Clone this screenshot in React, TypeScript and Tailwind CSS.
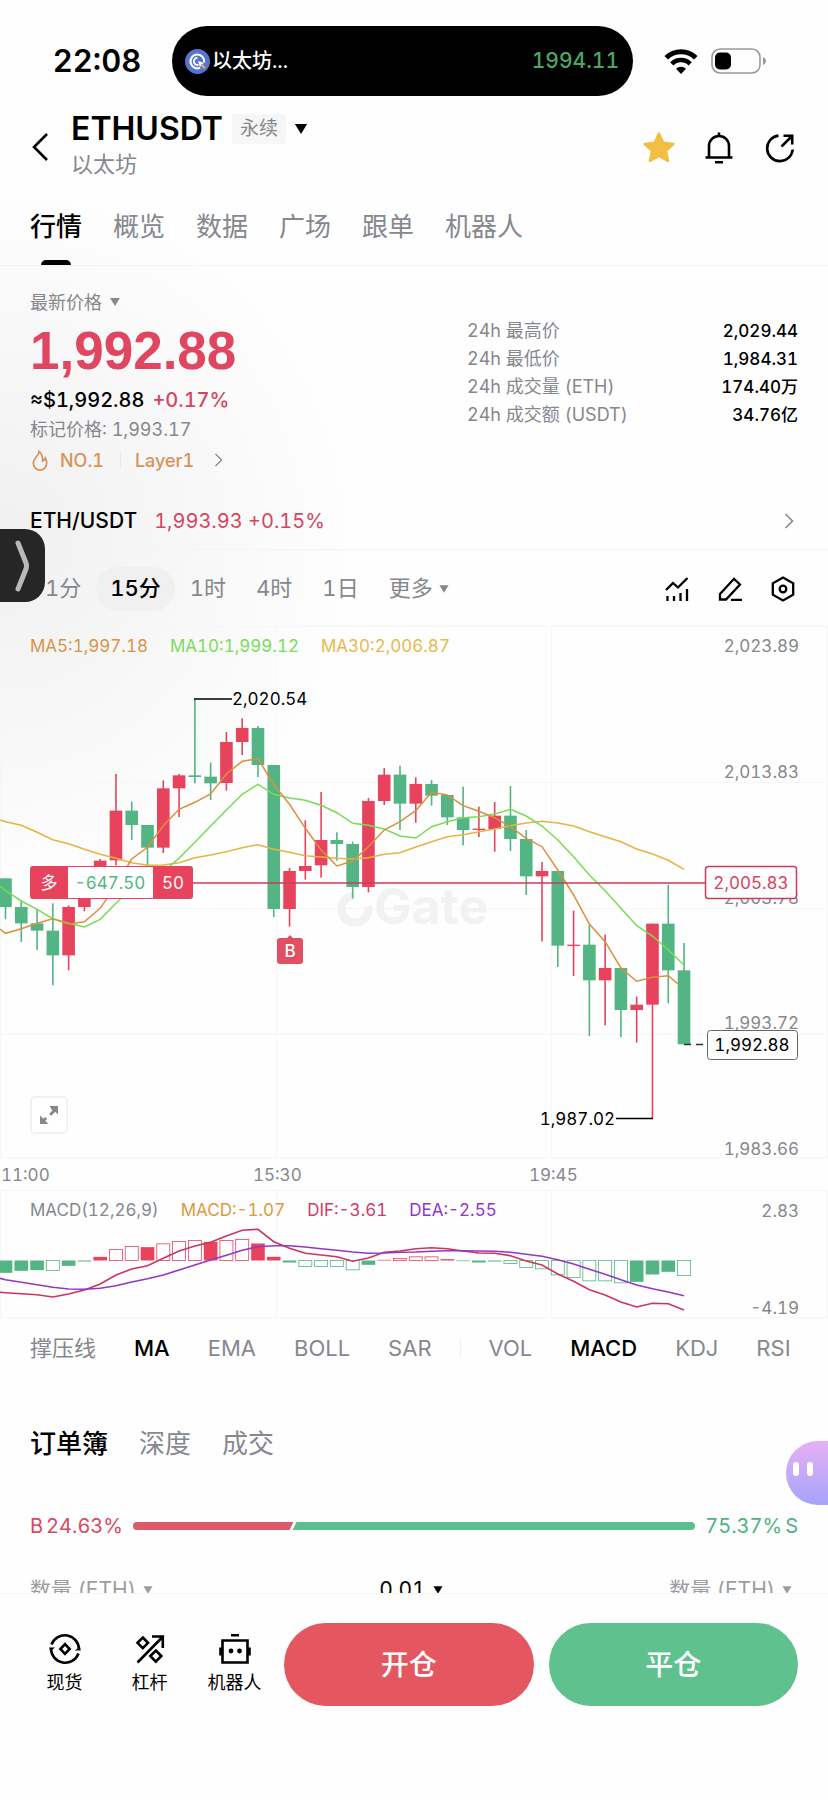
import React from "react";

type Candle = {
  o: "up" | "down";
  high: number;
  top: number;
  bottom: number;
  low: number;
};

type Bar = { v: number; filled?: boolean };

const RED = "#e8435d";
const GREEN = "#52b583";
const STEP = 15.78;

const cx = (i: number) => 5.5 + i * STEP;

// price series, three units to one chart pixel
const up = (high: number, top: number, bottom: number, low: number): Candle => ({ o: "up", high, top, bottom, low });
const down = (high: number, top: number, bottom: number, low: number): Candle => ({ o: "down", high, top, bottom, low });

const candles: Candle[] = [
  down(715, 715, 801, 838),
  down(781, 801, 850, 906),
  down(808, 850, 872, 930),
  down(790, 872, 946, 1036),
  up(796, 801, 946, 991),
  up(730, 740, 801, 814),
  up(657, 662, 740, 750),
  up(402, 512, 661, 676),
  down(485, 512, 555, 600),
  down(555, 555, 623, 680),
  up(421, 445, 623, 639),
  up(402, 406, 445, 531),
  down(177, 406, 411, 430),
  down(368, 410, 430, 480),
  up(276, 306, 429, 452),
  up(235, 264, 306, 345),
  down(258, 264, 375, 411),
  down(375, 375, 807, 831),
  up(684, 693, 807, 860),
  up(541, 678, 693, 719),
  up(456, 600, 676, 713),
  down(577, 600, 612, 662),
  down(605, 612, 741, 775),
  up(474, 483, 741, 757),
  up(384, 404, 483, 495),
  down(377, 404, 491, 570),
  up(412, 432, 491, 548),
  down(420, 432, 467, 497),
  down(465, 465, 532, 555),
  down(440, 532, 570, 616),
  up(500, 566, 570, 591),
  up(486, 527, 567, 635),
  down(438, 527, 597, 633),
  down(570, 597, 709, 765),
  up(666, 693, 709, 904),
  down(693, 693, 917, 981),
  up(812, 914, 918, 1008),
  down(856, 914, 1021, 1188),
  up(884, 984, 1021, 1156),
  down(984, 984, 1110, 1191),
  up(1070, 1094, 1110, 1208),
  up(851, 851, 1094, 1434),
  down(734, 851, 991, 1090),
  down(909, 991, 1213, 1213),
];

const ma5 = [880, 866, 850, 836, 852, 845, 805, 735, 657, 622, 557, 508, 487, 462, 402, 364, 356, 434, 493, 565, 630, 678, 663, 620, 570, 545, 512, 457, 465, 497, 514, 533, 560, 595, 620, 690, 765, 852, 905, 984, 1024, 1012, 1007];
const ma10 = [752, 783, 808, 836, 850, 861, 838, 790, 745, 720, 695, 655, 607, 558, 510, 463, 433, 463, 474, 481, 496, 518, 550, 556, 567, 588, 594, 560, 545, 533, 530, 522, 508, 528, 558, 600, 650, 705, 752, 805, 857, 888, 930, 975];
const ma30 = [545, 556, 577, 599, 611, 628, 643, 655, 668, 676, 675, 668, 653, 645, 635, 623, 614, 628, 637, 647, 651, 655, 657, 653, 643, 638, 621, 605, 590, 584, 575, 567, 557, 549, 544, 549, 558, 575, 590, 605, 627, 642, 661, 688];

const dif = [338, 341, 344, 351, 342, 330, 312, 285, 267, 257, 235, 213, 198, 187, 168, 151, 148, 185, 205, 220, 225, 230, 244, 234, 217, 213, 206, 203, 206, 213, 219, 220, 227, 243, 255, 282, 304, 329, 345, 366, 381, 370, 371, 390];
const dea = [299, 307, 314, 322, 327, 328, 325, 317, 306, 296, 285, 270, 255, 240, 226, 211, 200, 197, 197, 201, 206, 211, 216, 220, 219, 217, 216, 214, 212, 212, 213, 214, 217, 223, 229, 239, 252, 268, 283, 299, 315, 326, 336, 347];

const bars: Bar[] = [
  { v: -37, filled: true }, { v: -31, filled: true }, { v: -29, filled: true }, { v: -30 },
  { v: -16, filled: true }, { v: -3, filled: true }, { v: 11, filled: true }, { v: 33 },
  { v: 42 }, { v: 40, filled: true }, { v: 50 }, { v: 57 }, { v: 60 }, { v: 56, filled: true },
  { v: 60 }, { v: 63 }, { v: 51, filled: true }, { v: 11, filled: true }, { v: -6, filled: true },
  { v: -18 }, { v: -18 }, { v: -18 }, { v: -28 }, { v: -13, filled: true }, { v: 2, filled: true },
  { v: 6 }, { v: 11 }, { v: 11 }, { v: 4, filled: true }, { v: -2, filled: true },
  { v: -6, filled: true }, { v: -3, filled: true }, { v: -9 }, { v: -21 }, { v: -25 }, { v: -43 },
  { v: -51 }, { v: -61 }, { v: -61 }, { v: -67 }, { v: -64, filled: true }, { v: -42, filled: true },
  { v: -34, filled: true }, { v: -45 },
];

// starts at the left edge, where the series runs out of view
const line = (start: number, values: number[], offset: number) =>
  `M0 ${start} ` + values.map((v, i) => `L${cx(i).toFixed(1)} ${(v / 3 + offset).toFixed(1)}`).join(" ");

const Caret = ({ className }: { className: string }) => (
  <svg viewBox="0 0 12 9" className={className} fill="currentColor" aria-hidden="true">
    <path d="M.5 0h11L6 9z" />
  </svg>
);

const ChevronRight = ({ className }: { className: string }) => (
  <svg viewBox="0 0 10 16" className={className} fill="none" stroke="currentColor" strokeWidth="1.6" aria-hidden="true">
    <path d="M1.5 1l7 7-7 7" />
  </svg>
);

const StatusBar = () => (
  <div className="flex h-[96px] items-end">
    <div className="flex h-[70px] w-[172px] items-center justify-center pl-[22px] text-[31px] font-semibold">
      22:08
    </div>
    <div className="flex h-[70px] flex-1 items-center justify-between rounded-full bg-black pr-[14px] pl-[13px]">
      <div className="flex items-center gap-[2px]">
        <svg viewBox="0 0 24 24" className="size-[25px]" aria-hidden="true">
          <circle cx="12" cy="12" r="12" fill="#5873cf" />
          <path d="M14.5 18A6.6 6.6 0 1 1 18.4 13" fill="none" stroke="#fff" strokeWidth="2" />
          <path d="M12 8.5a3.4 3.4 0 1 0 1 6.6" fill="none" stroke="#fff" strokeWidth="1.8" />
          <path d="M12.5 11.5l6 2-3 1.3-1 3z" fill="#fff" />
          <path d="M16 15l3 3.4" stroke="#e8c14a" strokeWidth="2" />
        </svg>
        <span className="text-[20px] font-medium text-white">以太坊...</span>
      </div>
      <span className="text-[21px] font-medium text-[#4aa765]">1994.11</span>
    </div>
    <div className="flex h-[70px] w-[195px] items-center gap-[13px] pl-[31px]">
      <svg viewBox="0 0 34 25" className="h-[25px] w-[34px]" aria-label="Wi-Fi">
        <path d="M2.2 8.8a21 21 0 0 1 29.6 0" fill="none" stroke="#000" strokeWidth="5" />
        <path d="M7.8 14.8a13 13 0 0 1 18.4 0" fill="none" stroke="#000" strokeWidth="4.6" />
        <path d="M17 25l-5-5.2a7.2 7.2 0 0 1 10 0z" />
      </svg>
      <svg viewBox="0 0 56 26" className="h-[26px] w-[56px]" aria-label="电量">
        <rect x="1" y="1" width="48" height="24" rx="8" fill="none" stroke="#9a9a9a" strokeWidth="1.6" />
        <rect x="4" y="4.5" width="16" height="17" rx="5" />
        <path d="M52 9c4 1.5 4 6.5 0 8z" fill="#9a9a9a" />
      </svg>
    </div>
  </div>
);

const Header = () => (
  <header className="mt-2 flex h-20 items-center justify-between px-[30px]">
    <div className="flex items-center gap-[23px]">
      <button type="button" aria-label="返回" className="pt-[6px]">
        <svg viewBox="0 0 18 30" className="h-[30px] w-[18px]" fill="none" stroke="#000" strokeWidth="2.6">
          <path d="M17 2L4 15l13 13" />
        </svg>
      </button>
      <div className="h-20">
        <div className="flex h-[50px] items-center">
          <h1 className="text-[32px] font-semibold">ETHUSDT</h1>
          <span className="ml-[9px] rounded-[3px] bg-[#f6f6f6] px-2 text-[19px] leading-[30px] text-[#85888d]">永续</span>
          <button type="button" aria-label="切换合约" className="ml-2">
            <Caret className="h-[10px] w-[14px]" />
          </button>
        </div>
        <p className="text-[22px] leading-[20px] text-[#85888d]">以太坊</p>
      </div>
    </div>
    <div className="flex items-center gap-[27px] pt-2">
      <button type="button" aria-label="收藏">
        <svg viewBox="0 0 34 34" className="size-[34px]" fill="#f2bf43" stroke="#f2bf43" strokeWidth="2.5" strokeLinejoin="round">
          <path d="M17 2.5l4.3 9.2 10.2 1.2-7.5 6.9 2 10.2-9-5-9 5 2-10.2-7.5-6.9 10.2-1.2z" />
        </svg>
      </button>
      <button type="button" aria-label="提醒">
        <svg viewBox="0 0 34 34" className="size-[34px]" fill="none" stroke="#000" strokeWidth="2.6">
          <path d="M16 1.5v4M6 26V15a10 10 0 0 1 20 0v11M2.5 26.5h27M12 31.2h8" />
        </svg>
      </button>
      <button type="button" aria-label="分享">
        <svg viewBox="0 0 34 34" className="size-[34px]" fill="none" stroke="#000" strokeWidth="2.6">
          <path d="M14.5 4.6A12.8 12.8 0 1 0 28.7 18.5M17.5 15.5L28 5M19.5 4.8H28.2v8.7" />
        </svg>
      </button>
    </div>
  </header>
);

const tabs = ["行情", "概览", "数据", "广场", "跟单", "机器人"];

const Tabs = () => (
  <nav className="flex h-[82px] items-stretch gap-[31px] border-b border-[#f4f4f4] px-[30px] text-[26px]">
    {tabs.map((tab, i) => (
      <button
        key={tab}
        type="button"
        className={
          i === 0
            ? "flex flex-col items-center justify-end gap-[14px] font-medium text-black"
            : "flex flex-col items-center justify-end gap-[14px] text-[#85888d]"
        }
      >
        <span>{tab}</span>
        <span className={i === 0 ? "h-[5px] w-[30px] rounded-t-full bg-black" : "h-[5px] w-[30px]"} />
      </button>
    ))}
  </nav>
);

const stats = [
  { label: "24h 最高价", value: "2,029.44" },
  { label: "24h 最低价", value: "1,984.31" },
  { label: "24h 成交量 (ETH)", value: "174.40万" },
  { label: "24h 成交额 (USDT)", value: "34.76亿" },
];

const Quote = () => (
  <section className="flex h-[226px] justify-between px-[30px] pt-[21px]">
    <div>
      <button type="button" className="flex h-[30px] items-center gap-[7px] text-[18px] text-[#85888d]">
        最新价格
        <Caret className="h-2 w-[12px]" />
      </button>
      <p className="font-['Liberation_Sans',sans-serif] text-[53px] leading-[68px] font-bold text-[#e0465f]">1,992.88</p>
      <p className="flex gap-2 text-[20px] leading-[30px] font-medium">
        <span>≈$1,992.88</span>
        <span className="text-[#d64560]">+0.17%</span>
      </p>
      <p className="text-[18px] leading-[30px] text-[#85888d]">标记价格: 1,993.17</p>
      <button type="button" className="flex h-[30px] items-center text-[18px] font-medium text-[#d8935a]">
        <svg viewBox="0 0 20 22" className="mr-[10px] h-[21px] w-[20px]" fill="none" stroke="currentColor" strokeWidth="1.8">
          <path d="M9 1.5C9 6 3 8.5 3 14a7 7 0 0 0 14 0c0-2.500-.5-3.700-1.400-5.500-.8 1.800-1.600 2.500-2.800 3C12.800 8 12 4 9 1.500z" />
        </svg>
        NO.1
        <span className="mr-[14px] ml-[16px] h-[14px] w-px bg-[#e8e8e8]" />
        Layer1
        <ChevronRight className="ml-[20px] h-[14px] w-[9px] text-[#85888d]" />
      </button>
    </div>
    <dl className="w-[331px] pt-[30px] leading-[28px]">
      {stats.map((s) => (
        <div key={s.label} className="flex justify-between">
          <dt className="text-[18px] text-[#85888d]">{s.label}</dt>
          <dd className="text-[17px] font-medium">{s.value}</dd>
        </div>
      ))}
    </dl>
  </section>
);

const Spot = () => (
  <a href="#spot" className="flex h-[58px] items-center border-b border-[#f4f4f4] px-[30px] text-[20px]">
    <span className="text-[21px] font-medium">ETH/USDT</span>
    <span className="ml-[17px] text-[#d64560]">1,993.93 +0.15%</span>
    <ChevronRight className="mr-1 ml-auto h-[16px] w-[10px] text-[#85888d]" />
  </a>
);

const Intervals = () => (
  <div className="relative flex h-[76px] items-center justify-between pt-px pr-[32px] pl-[45px]">
    <div className="flex items-center text-[22px] text-[#85888d]">
      <button type="button">1分</button>
      <button type="button" className="mx-[15px] h-[44px] rounded-full bg-[#f0f0f0] px-[14px] font-medium text-black">
        15分
      </button>
      <div className="flex gap-[30px]">
        <button type="button">1时</button>
        <button type="button">4时</button>
        <button type="button">1日</button>
        <button type="button" className="flex items-center gap-[6px]">
          更多
          <Caret className="h-[8px] w-[10px]" />
        </button>
      </div>
    </div>
    <div className="flex items-center gap-[27px]">
      <button type="button" aria-label="指标">
        <svg viewBox="0 0 26 26" className="size-[26px]" fill="none" stroke="#000" strokeWidth="2.3">
          <path d="M2 14l7-7 5 4.500L23.500 2M3.500 25v-5M10 25v-5M16.500 25v-8M23 25V13" />
        </svg>
      </button>
      <button type="button" aria-label="画线">
        <svg viewBox="0 0 26 26" className="size-[26px]" fill="none" stroke="#000" strokeWidth="2.3">
          <path d="M3 18L17 2.800l6 5.700L9 23.500H3zM14 23.800h11" />
        </svg>
      </button>
      <button type="button" aria-label="设置">
        <svg viewBox="0 0 26 26" className="size-[26px]" fill="none" stroke="#000" strokeWidth="2.3">
          <path d="M13 1.500l10.200 5.800v11.400L13 24.500 2.800 18.700V7.300z" />
          <circle cx="13" cy="13" r="3.3" />
        </svg>
      </button>
    </div>
    <button
      type="button"
      aria-label="展开侧栏"
      className="absolute -top-[21px] left-0 flex h-[73px] w-[45px] items-center justify-center rounded-r-[20px] bg-[#262626]"
    >
      <svg viewBox="0 0 18 52" className="h-[52px] w-[18px]" fill="none" stroke="#b9b9bd" strokeWidth="5" strokeLinecap="round" strokeLinejoin="round">
        <path d="M4 3l8 20q1 3 0 6L4 49" />
      </svg>
    </button>
  </div>
);

const PriceChart = () => (
  <section className="relative">
    <div className="absolute top-[7px] left-[30px] flex gap-[22px] text-[17px] leading-[26px]">
      <span className="text-[#d6954c]">MA5:1,997.18</span>
      <span className="text-[#7ddb5c]">MA10:1,999.12</span>
      <span className="text-[#e6b94f]">MA30:2,006.87</span>
    </div>
    <svg viewBox="0 0 828 532" className="block w-full" fontFamily="inherit">
      <path
        d="M0 .5H828M0 156.500H828M0 282.500H828M0 408.500H828M0 531.500H828M.5 0V532M276.500 0V532M551.500 0V532M827.500 0V532"
        stroke="#f6f6f6"
        fill="none"
      />
      {/* watermark */}
      <circle cx="355" cy="283" r="13.5" fill="none" stroke="#f2f2f3" strokeWidth="8" strokeDasharray="66 19" transform="rotate(-12 355 283)" />
      <text x="374" y="298" className="text-[50px] font-bold" fill="#f2f2f3">Gate</text>

      <g className="text-[17px]" fill="#85888d" textAnchor="end">
        <text x="799" y="26">2,023.89</text>
        <text x="799" y="152">2,013.83</text>
        <text x="799" y="278">2,003.78</text>
        <text x="799" y="403">1,993.72</text>
        <text x="799" y="529">1,983.66</text>
      </g>

      {candles.map((c, i) => {
        const color = c.o === "up" ? RED : GREEN;
        return (
          <g key={i} fill={color}>
            <rect x={cx(i) - 0.8} y={c.high / 3 + 14} width="1.6" height={(c.low - c.high) / 3} />
            <rect x={cx(i) - 6.3} y={c.top / 3 + 14} width="12.6" height={(c.bottom - c.top) / 3} />
          </g>
        );
      })}

      <path d={line(194, ma30, 14)} fill="none" stroke="#e6b443" strokeWidth="1.5" />
      <path d={line(260, ma10, 14)} fill="none" stroke="#76dd55" strokeWidth="1.5" />
      <path d={line(303, ma5, 14) + " L678 358"} fill="none" stroke="#dc8f3e" strokeWidth="1.5" />

      <path d="M193 257H705" stroke="#c93c5b" strokeWidth="1.6" />

      {/* high and low of the range */}
      <g className="text-[17px]">
        <path d="M194 73H232" stroke="#000" strokeWidth="1.5" />
        <text x="232" y="79">2,020.54</text>
        <path d="M616 492.500H653" stroke="#000" strokeWidth="1.5" />
        <text x="615" y="499" textAnchor="end">1,987.02</text>
      </g>

      {/* open position */}
      <g className="text-[17px]" textAnchor="middle">
        <rect x="30" y="240" width="163" height="33" rx="3" fill={RED} />
        <rect x="68" y="241" width="85" height="31" fill="#fff" />
        <text x="49" y="263" fill="#fff">多</text>
        <text x="110" y="263" fill={GREEN}>-647.50</text>
        <text x="173" y="263" fill="#fff">50</text>
        <rect x="705.5" y="240.5" width="91" height="32" rx="3" fill="#fdfdfd" stroke="#c93c5b" strokeWidth="1.5" />
        <text x="751" y="263" fill="#d64560">2,005.83</text>
      </g>

      {/* buy marker */}
      <path d="M290 309l4 4h-8z" fill="#df5063" />
      <rect x="277" y="312" width="26" height="26" rx="3" fill="#df5063" />
      <text x="290" y="331" textAnchor="middle" className="text-[17px] font-medium" fill="#fff">B</text>

      {/* last price */}
      <path d="M684 418.500H703" stroke="#333" strokeWidth="1.5" strokeDasharray="7 5" />
      <rect x="707.5" y="404.5" width="90" height="29" rx="3" fill="#fdfdfd" stroke="#666" />
      <text x="752" y="425" textAnchor="middle" className="text-[17px]">1,992.88</text>
    </svg>
    <button
      type="button"
      aria-label="全屏"
      className="absolute bottom-[24px] left-[30px] flex size-[38px] items-center justify-center rounded-[5px] border-2 border-[#f2f2f2] bg-white"
    >
      <svg viewBox="0 0 18 18" className="size-[18px]" fill="#85888d">
        <path d="M9.500 0H18v8.500l-2.700-2.700-4 4L9.200 7.700l3.200-3.200zM0 9.500v8.500h8.500l-3.200-3.200 1.900-1.900-2-2-1.900 1.900z" />
      </svg>
    </button>
  </section>
);

const TimeAxis = () => (
  <div className="grid h-[32px] grid-cols-3 items-center pt-1 text-[17px] text-[#85888d]">
    <span className="pl-px">11:00</span>
    <span className="-ml-[23px]">15:30</span>
    <span className="-ml-[23px]">19:45</span>
  </div>
);

const MacdChart = () => (
  <section className="relative">
    <div className="absolute top-[7px] left-[30px] flex gap-[22px] text-[17px] leading-[26px]">
      <span className="text-[#85888d]">MACD(12,26,9)</span>
      <span className="text-[#dc9a3f]">MACD:-1.07</span>
      <span className="text-[#d13a68]">DIF:-3.61</span>
      <span className="text-[#9236cf]">DEA:-2.55</span>
    </div>
    <svg viewBox="0 0 828 128" className="block w-full" fontFamily="inherit">
      <path d="M0 .5H828M0 127.500H828M.5 0V128M276.500 0V128M551.500 0V128M827.500 0V128" stroke="#f6f6f6" fill="none" />
      <g className="text-[17px]" fill="#85888d" textAnchor="end">
        <text x="799" y="27">2.83</text>
        <text x="799" y="124">-4.19</text>
      </g>
      {bars.map((b, i) => {
        const color = b.v > 0 ? RED : GREEN;
        const h = Math.abs(b.v) / 3;
        return (
          <rect
            key={i}
            x={cx(i) - (b.filled ? 6.8 : 6.5)}
            y={b.v > 0 ? 70.5 - h : 70.5}
            width={b.filled ? 13.6 : 13}
            height={h}
            fill={b.filled ? color : "#fefefe"}
            stroke={b.filled ? "none" : color}
            strokeWidth=".8"
          />
        );
      })}
      <path d={line(102.3, dif, -10)} fill="none" stroke="#cc3560" strokeWidth="1.6" />
      <path d={line(88.3, dea, -10)} fill="none" stroke="#9436c6" strokeWidth="1.6" />
    </svg>
  </section>
);

const Indicators = () => (
  <div className="flex h-[60px] items-center gap-[38px] pl-[30px] text-[22px] text-[#85888d]">
    <button type="button" className="shrink-0">撑压线</button>
    <button type="button" className="font-medium text-black">MA</button>
    <button type="button">EMA</button>
    <button type="button">BOLL</button>
    <button type="button">SAR</button>
    <span className="-mx-[10px] h-[20px] w-px bg-[#f0f0f0]" />
    <button type="button">VOL</button>
    <button type="button" className="font-medium text-black">MACD</button>
    <button type="button">KDJ</button>
    <button type="button">RSI</button>
  </div>
);

const OrderBook = () => (
  <section className="relative h-[215px] overflow-hidden">
    <div className="mt-[46px] flex gap-[31px] px-[30px] text-[26px] leading-[40px] text-[#85888d]">
      <button type="button" className="font-medium text-black">订单簿</button>
      <button type="button">深度</button>
      <button type="button">成交</button>
    </div>
    <div className="mt-[47px] flex items-center gap-[10px] px-[30px] text-[20px] leading-[30px]">
      <p className="flex gap-[3px] text-[#d9495f]">
        <span>B</span>
        <span>24.63%</span>
      </p>
      <div className="h-[8px] flex-1 overflow-hidden rounded-full">
        <svg viewBox="0 0 564 8" preserveAspectRatio="none" className="h-full w-full">
          <path d="M0 0H161L157 8H0z" fill="#dd5a68" />
          <path d="M164 0H564V8H160z" fill="#5fbf8c" />
        </svg>
      </div>
      <p className="flex gap-[3px] text-[#4fb381]">
        <span>75.37%</span>
        <span>S</span>
      </p>
    </div>
    <div className="mt-[34px] flex items-center justify-between pr-[36px] pl-[30px] text-[21px] leading-[30px] text-[#9b9da1]">
      <button type="button" className="flex items-center gap-[7px]">
        数量 (ETH)
        <Caret className="h-2 w-[10px]" />
      </button>
      <button type="button" className="flex items-center gap-[7px] text-black">
        0.01
        <Caret className="h-2 w-[10px]" />
      </button>
      <button type="button" className="flex items-center gap-[7px]">
        数量 (ETH)
        <Caret className="h-2 w-[10px]" />
      </button>
    </div>
    <button
      type="button"
      aria-label="助手"
      className="absolute top-[63px] right-0 flex h-[64px] w-[42px] items-start gap-[8px] rounded-l-full bg-gradient-to-b from-[#e6b0f5] to-[#a5a3fb] pt-[21px] pl-[7px]"
    >
      <span className="h-[14px] w-[6px] rounded-full bg-white" />
      <span className="h-[14px] w-[6px] rounded-full bg-white" />
    </button>
  </section>
);

const BottomBar = () => (
  <footer className="flex h-[207px] items-start gap-[7px] border-t border-[#f6f6f6] bg-[#fefefe] pt-[29px] pr-[30px] pl-[22px]">
    <nav className="grid h-[83px] w-[255px] grid-cols-3 items-center text-[18px] leading-[26px]">
      <a href="#spot" className="flex flex-col items-center gap-[5px]">
        <svg viewBox="0 0 32 32" className="size-[32px]" fill="none" stroke="#000" strokeWidth="2.6">
          <path d="M2.500 11.500A14.200 14.200 0 0 1 30 16.500M29.500 20.500A14.200 14.200 0 0 1 2 15.500" />
          <path d="M31.800 17.500h-6l5-3.500zM.2 14.500h6l-5 3.500z" fill="#000" stroke="none" />
          <path d="M16 11.200l4.600 4.800-4.600 4.800-4.600-4.800z" />
        </svg>
        现货
      </a>
      <a href="#margin" className="flex flex-col items-center gap-[5px]">
        <svg viewBox="0 0 32 32" className="size-[32px]" fill="none" stroke="#000" strokeWidth="2.6">
          <path d="M3.500 29.500L28.500 4M18 3.500H28.800V15M8.800 4.500l5.200 5.300-5.200 5.300-5.300-5.300zM21.800 17.500l5.500 5.500-5.500 5.700-5.500-5.700z" />
        </svg>
        杠杆
      </a>
      <a href="#bot" className="flex flex-col items-center gap-[5px]">
        <svg viewBox="0 0 32 32" className="size-[32px]" fill="none" stroke="#000" strokeWidth="2.6">
          <path d="M3.500 7.500h25v22h-25zM12 2.300h8M1.500 14.500v8M30.500 14.500v8" />
          <g fill="#000" stroke="none">
            <circle cx="12" cy="18" r="2.4" />
            <circle cx="20.5" cy="18" r="2.4" />
          </g>
        </svg>
        机器人
      </a>
    </nav>
    <div className="flex flex-1 gap-[15px]">
      <button type="button" className="h-[83px] flex-1 rounded-full bg-[#e45761] text-[28px] font-medium text-white">
        开仓
      </button>
      <button type="button" className="h-[83px] flex-1 rounded-full bg-[#5fc18d] text-[28px] font-medium text-white">
        平仓
      </button>
    </div>
  </footer>
);

const App: React.FC = () => {
  return (
    <main className="w-full overflow-hidden bg-[#fefefe] bg-[radial-gradient(circle_360px_at_0_540px,#f0f0f0,#fefefe)] font-['Inter','Noto_Sans_CJK_SC',sans-serif] text-black tabular-nums">
      <StatusBar />
      <Header />
      <Tabs />
      <Quote />
      <Spot />
      <Intervals />
      <PriceChart />
      <TimeAxis />
      <MacdChart />
      <Indicators />
      <OrderBook />
      <BottomBar />
    </main>
  );
};

export default App;
